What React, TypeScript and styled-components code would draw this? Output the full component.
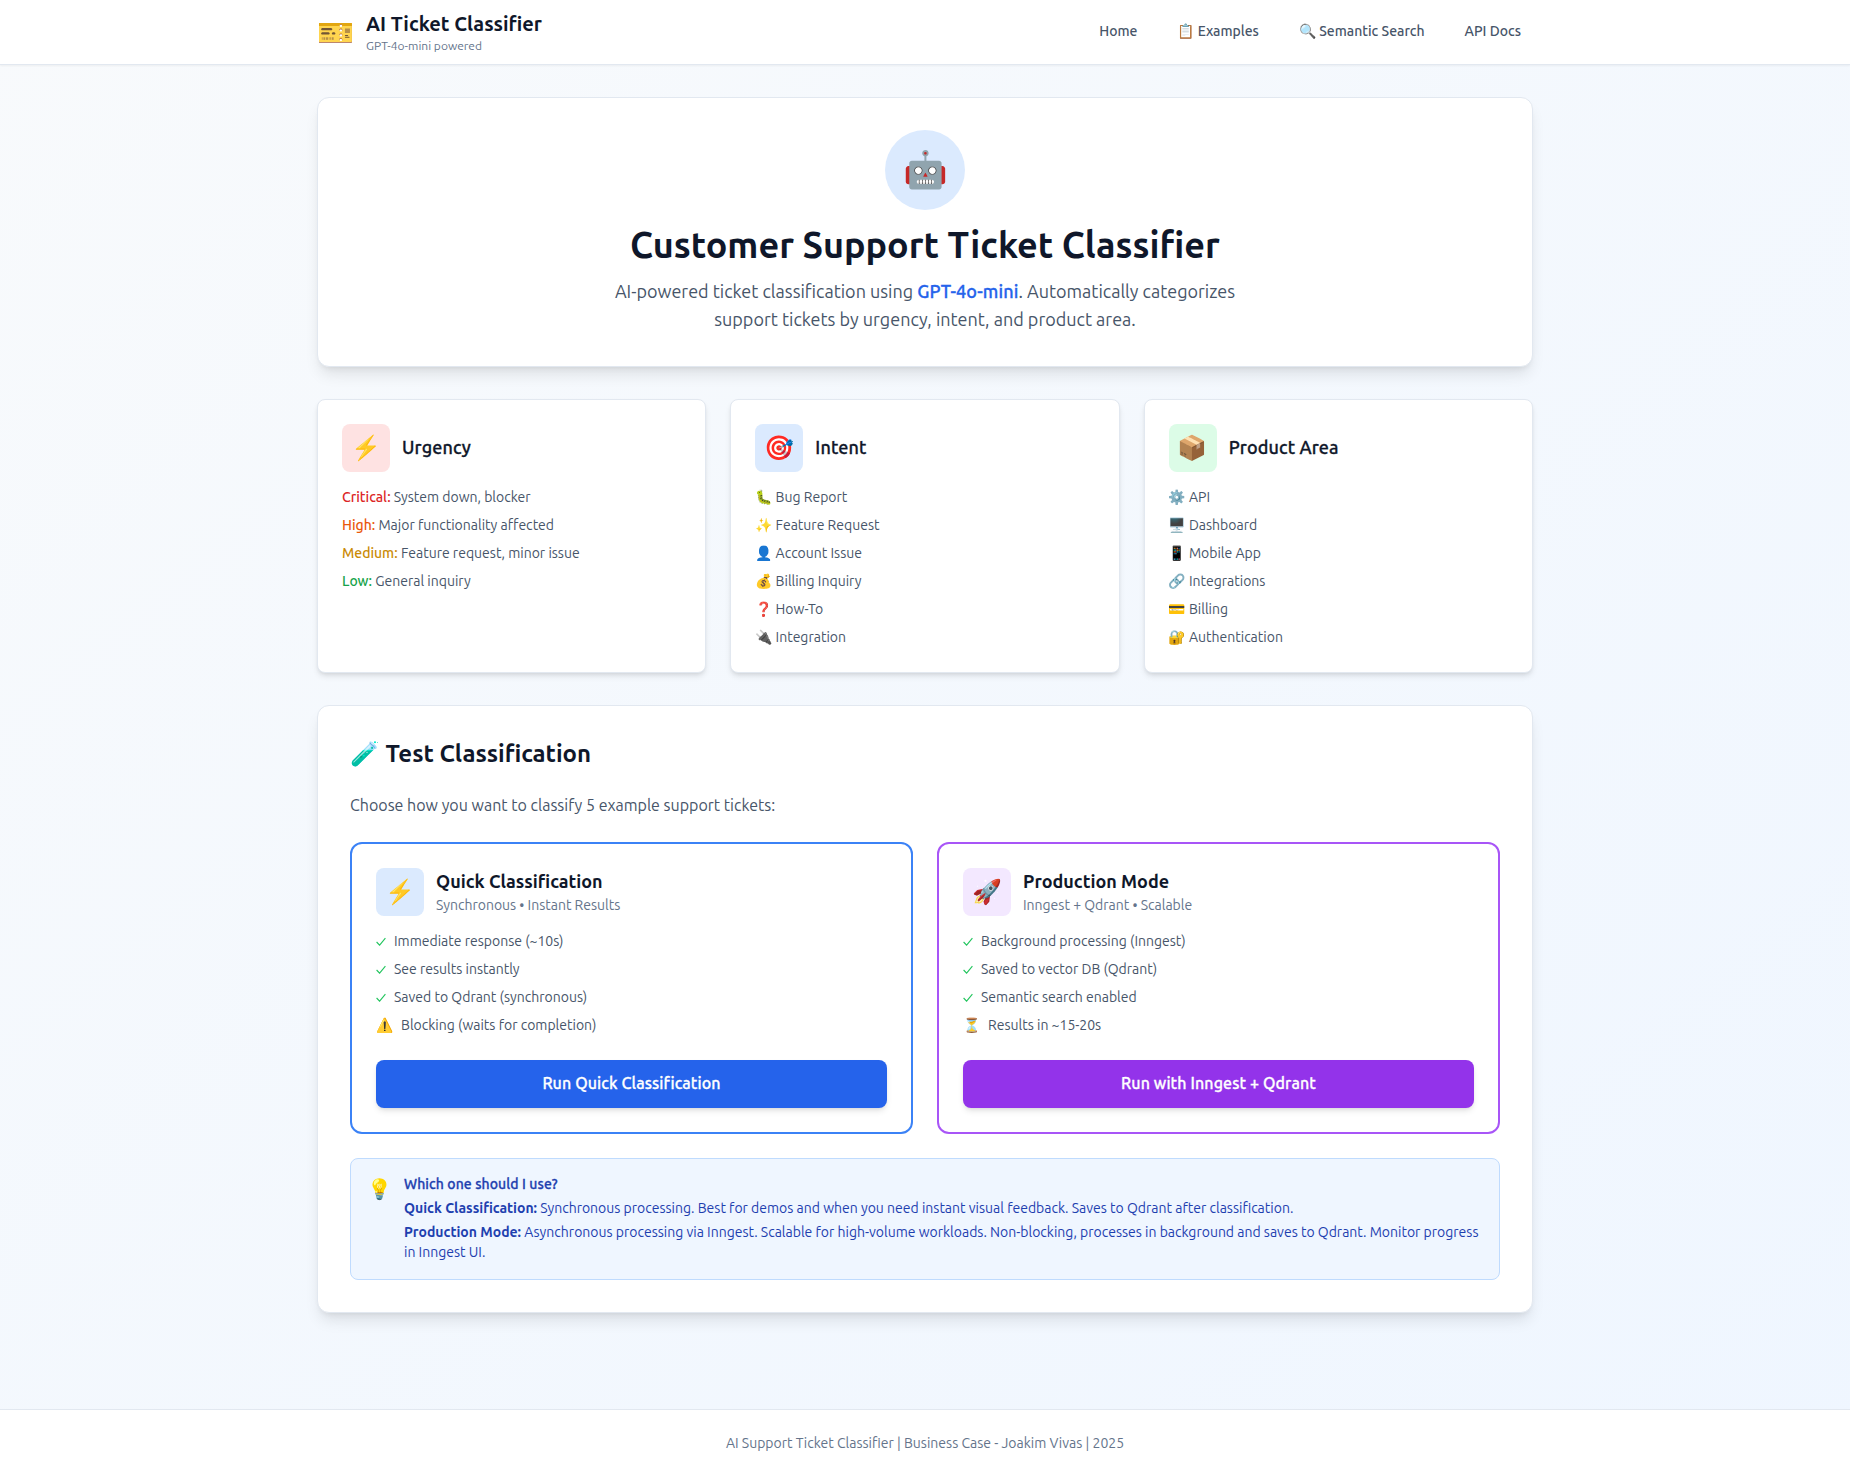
import React from "react";
import styled, { createGlobalStyle, css } from "styled-components";

const GlobalStyle = createGlobalStyle`
  *, *::before, *::after { box-sizing: border-box; }
  body {
    margin: 0;
    font-family: Ubuntu, "Noto Sans", "Noto Color Emoji", sans-serif;
    color: #0f172a;
  }
  h1, h2, h3, p, ul { margin: 0; padding: 0; }
  ul { list-style: none; }
`;

/* A weight between Ubuntu Medium and Ubuntu Bold. */
const semibold = css`
  font-weight: 500;
  letter-spacing: 0.0065em;
  -webkit-text-stroke: 0.3px currentColor;
`;

const Page = styled.div`
  min-height: 100vh;
  display: flex;
  flex-direction: column;
  background: linear-gradient(to bottom right, #f8fafc, #eff6ff);
`;

const Header = styled.header`
  background: #fff;
  border-bottom: 1px solid #e2e8f0;
  box-shadow: 0 1px 2px 0 rgba(0, 0, 0, 0.05);
`;

const HeaderInner = styled.div`
  width: 1280px;
  height: 64px;
  margin: 0 auto;
  padding: 0 32px;
  display: flex;
  align-items: center;
  justify-content: space-between;
`;

const Brand = styled.div`
  display: flex;
  align-items: center;
  gap: 12px;
`;

const BrandIcon = styled.span`
  font-size: 30px;
  line-height: 36px;
  width: 37px;
`;

const BrandName = styled.div`
  font-size: 20px;
  line-height: 28px;
  font-weight: 600;
`;

const BrandSub = styled.div`
  font-size: 12px;
  line-height: 16px;
  color: #64748b;
`;

const Nav = styled.nav`
  display: flex;
  gap: 16px;
`;

const NavLink = styled.a`
  padding: 7px 12px 9px;
  font-size: 14px;
  line-height: 20px;
  font-weight: 500;
  color: #475569;
  white-space: nowrap;
`;

const Emoji = styled.span`
  margin-right: -0.4px;
`;

const Main = styled.main`
  width: 1280px;
  margin: 0 auto;
  padding: 32px;
  display: flex;
  flex-direction: column;
  gap: 32px;
`;

const Panel = styled.section`
  background: #fff;
  border: 1px solid #e2e8f0;
  border-radius: 12px;
  padding: 32px;
  box-shadow: 0 10px 15px -3px rgba(0, 0, 0, 0.1), 0 4px 6px -4px rgba(0, 0, 0, 0.1);
`;

const Hero = styled(Panel)`
  display: flex;
  flex-direction: column;
  align-items: center;
  text-align: center;
`;

const HeroIcon = styled.div`
  width: 80px;
  height: 80px;
  border-radius: 50%;
  background: #dbeafe;
  display: flex;
  align-items: center;
  justify-content: center;
  padding: 0 0 2px 1px;
  font-size: 36px;
  line-height: 40px;
`;

const HeroTitle = styled.h1`
  margin-top: 15px;
  font-size: 36px;
  line-height: 40px;
  font-weight: 600;
`;

const HeroText = styled.p`
  margin: 12px 0 1px;
  width: 672px;
  font-size: 18px;
  line-height: 28px;
  color: #475569;

  strong { ${semibold} color: #2563eb; }
`;

const Columns = styled.div<{ $count: number }>`
  display: grid;
  grid-template-columns: repeat(${(p) => p.$count}, minmax(0, 1fr));
  gap: 24px;
`;

const Card = styled.article`
  background: #fff;
  border: 1px solid #e2e8f0;
  border-radius: 8px;
  padding: 24px;
  box-shadow: 0 4px 6px -1px rgba(0, 0, 0, 0.1), 0 2px 4px -2px rgba(0, 0, 0, 0.1);
`;

const CardHead = styled.div`
  display: flex;
  align-items: center;
  gap: 12px;
  margin-bottom: 15px;
`;

const IconTile = styled.div<{ $tint: string }>`
  width: 48px;
  height: 48px;
  border-radius: 8px;
  background: ${(p) => p.$tint};
  display: flex;
  align-items: center;
  justify-content: center;
  font-size: 24px;
  line-height: 32px;
`;

const CardText = styled.div`
  margin: -1px 0 1px;
`;

const CardTitle = styled.h3`
  font-size: 18px;
  line-height: 28px;
  ${semibold}
`;

const ModeTitle = styled.h3`
  font-size: 18px;
  line-height: 28px;
  font-weight: 700;
`;

const List = styled.ul`
  && { padding-bottom: 1px; }
  display: flex;
  flex-direction: column;
  gap: 8px;
  font-size: 14px;
  line-height: 20px;
  color: #475569;
`;

const Item = styled.li`
  height: 20px;
  white-space: nowrap;
`;

const Level = styled.span<{ $color: string }>`
  font-weight: 500;
  color: ${(p) => p.$color};
`;

const SectionTitle = styled.h2`
  && { margin-bottom: 23px; }
  font-size: 24px;
  line-height: 32px;
  font-weight: 600;
`;

const Intro = styled.p`
  && { margin-bottom: 25px; }
  font-size: 16px;
  line-height: 24px;
  color: #475569;
`;

const ModeCard = styled.article<{ $accent: string }>`
  border: 2px solid ${(p) => p.$accent};
  border-radius: 12px;
  padding: 24px;
`;

const ModeSub = styled.p`
  font-size: 14px;
  line-height: 20px;
  color: #64748b;
`;

const Feature = styled.li`
  display: flex;
  align-items: center;
  gap: 8px;
  height: 20px;
  white-space: nowrap;
`;

const Tick = styled.svg`
  width: 10px;
  height: 10px;
  fill: none;
  stroke: #22c55e;
  stroke-width: 1.1;
`;

const RunButton = styled.button<{ $fill: string }>`
  display: block;
  width: 100%;
  height: 48px;
  margin-top: 24px;
  padding: 0 0 2px;
  border: 0;
  border-radius: 8px;
  background: ${(p) => p.$fill};
  color: #fff;
  font-family: inherit;
  font-size: 16px;
  line-height: 24px;
  ${semibold}
  box-shadow: 0 4px 6px -1px rgba(0, 0, 0, 0.1), 0 2px 4px -2px rgba(0, 0, 0, 0.1);
`;

const Note = styled.aside`
  display: flex;
  gap: 12px;
  margin-top: 24px;
  padding: 16px;
  border: 1px solid #bfdbfe;
  border-radius: 8px;
  background: #eff6ff;
  color: #1e40af;
`;

const NoteIcon = styled.span`
  font-size: 20px;
  line-height: 28px;
  width: 25px;
  flex: none;
`;

const NoteBody = styled.div`
  display: flex;
  flex-direction: column;
  gap: 4px;
  margin: -1px 0 1px;
  font-size: 14px;
  line-height: 20px;

  strong { font-weight: 700; }
`;

const NoteTitle = styled.p`
  ${semibold}
`;

const Footer = styled.footer`
  margin-top: 64px;
  padding: 23px 24px 25px;
  border-top: 1px solid #e2e8f0;
  background: #fff;
  text-align: center;
  font-size: 14px;
  line-height: 20px;
  color: #64748b;
`;

const levels = [
  { name: "Critical:", text: "System down, blocker", color: "#dc2626" },
  { name: "High:", text: "Major functionality affected", color: "#ea580c" },
  { name: "Medium:", text: "Feature request, minor issue", color: "#ca8a04" },
  { name: "Low:", text: "General inquiry", color: "#16a34a" },
];

const intents = [
  ["🐛", "Bug Report"],
  ["✨", "Feature Request"],
  ["👤", "Account Issue"],
  ["💰", "Billing Inquiry"],
  ["❓", "How-To"],
  ["🔌", "Integration"],
];

const areas = [
  ["⚙️", "API"],
  ["🖥️", "Dashboard"],
  ["📱", "Mobile App"],
  ["🔗", "Integrations"],
  ["💳", "Billing"],
  ["🔐", "Authentication"],
];

const modes = [
  {
    icon: "⚡", tint: "#dbeafe", accent: "#3b82f6", fill: "#2563eb",
    title: "Quick Classification", sub: "Synchronous • Instant Results",
    features: ["Immediate response (~10s)", "See results instantly", "Saved to Qdrant (synchronous)"],
    caveatIcon: "⚠️", caveat: "Blocking (waits for completion)", action: "Run Quick Classification",
  },
  {
    icon: "🚀", tint: "#f3e8ff", accent: "#a855f7", fill: "#9333ea",
    title: "Production Mode", sub: "Inngest + Qdrant • Scalable",
    features: ["Background processing (Inngest)", "Saved to vector DB (Qdrant)", "Semantic search enabled"],
    caveatIcon: "⏳", caveat: "Results in ~15-20s", action: "Run with Inngest + Qdrant",
  },
];

function EmojiList({ items }: { items: string[][] }) {
  return (
    <List>
      {items.map(([icon, label]) => (
        <Item key={label}>
          <Emoji>{icon}</Emoji> {label}
        </Item>
      ))}
    </List>
  );
}

export default function App() {
  return (
    <Page>
      <GlobalStyle />
      <Header>
        <HeaderInner>
          <Brand>
            <BrandIcon>🎫</BrandIcon>
            <div>
              <BrandName>AI Ticket Classifier</BrandName>
              <BrandSub>GPT-4o-mini powered</BrandSub>
            </div>
          </Brand>
          <Nav>
            <NavLink>Home</NavLink>
            <NavLink><Emoji>📋</Emoji> Examples</NavLink>
            <NavLink><Emoji>🔍</Emoji> Semantic Search</NavLink>
            <NavLink>API Docs</NavLink>
          </Nav>
        </HeaderInner>
      </Header>
      <Main>
        <Hero>
          <HeroIcon>🤖</HeroIcon>
          <HeroTitle>Customer Support Ticket Classifier</HeroTitle>
          <HeroText>
            AI-powered ticket classification using <strong>GPT-4o-mini</strong>. Automatically categorizes
            <br />
            support tickets by urgency, intent, and product area.
          </HeroText>
        </Hero>
        <Columns $count={3}>
          <Card>
            <CardHead>
              <IconTile $tint="#fee2e2">⚡</IconTile>
              <CardText><CardTitle>Urgency</CardTitle></CardText>
            </CardHead>
            <List>
              {levels.map((l) => (
                <Item key={l.name}>
                  <Level $color={l.color}>{l.name}</Level> {l.text}
                </Item>
              ))}
            </List>
          </Card>
          <Card>
            <CardHead>
              <IconTile $tint="#dbeafe">🎯</IconTile>
              <CardText><CardTitle>Intent</CardTitle></CardText>
            </CardHead>
            <EmojiList items={intents} />
          </Card>
          <Card>
            <CardHead>
              <IconTile $tint="#dcfce7">📦</IconTile>
              <CardText><CardTitle>Product Area</CardTitle></CardText>
            </CardHead>
            <EmojiList items={areas} />
          </Card>
        </Columns>
        <Panel>
          <SectionTitle>🧪 Test Classification</SectionTitle>
          <Intro>Choose how you want to classify 5 example support tickets:</Intro>
          <Columns $count={2}>
            {modes.map((m) => (
              <ModeCard key={m.title} $accent={m.accent}>
                <CardHead>
                  <IconTile $tint={m.tint}>{m.icon}</IconTile>
                  <CardText>
                    <ModeTitle>{m.title}</ModeTitle>
                    <ModeSub>{m.sub}</ModeSub>
                  </CardText>
                </CardHead>
                <List>
                  {m.features.map((f) => (
                    <Feature key={f}>
                      <Tick viewBox="0 0 10 10"><path d="M0.6 6 L3.6 9.2 L9.4 2.2" /></Tick>
                      <span>{f}</span>
                    </Feature>
                  ))}
                  <Feature>
                    <Emoji>{m.caveatIcon}</Emoji>
                    <span>{m.caveat}</span>
                  </Feature>
                </List>
                <RunButton $fill={m.fill}>{m.action}</RunButton>
              </ModeCard>
            ))}
          </Columns>
          <Note>
            <NoteIcon>💡</NoteIcon>
            <NoteBody>
              <NoteTitle>Which one should I use?</NoteTitle>
              <p>
                <strong>Quick Classification:</strong> Synchronous processing. Best for demos and when you need instant visual feedback. Saves to Qdrant after classification.
              </p>
              <p>
                <strong>Production Mode:</strong> Asynchronous processing via Inngest. Scalable for high-volume workloads. Non-blocking, processes in background and saves to Qdrant. Monitor progress in Inngest UI.
              </p>
            </NoteBody>
          </Note>
        </Panel>
      </Main>
      <Footer>AI Support Ticket Classifier | Business Case - Joakim Vivas | 2025</Footer>
    </Page>
  );
}
